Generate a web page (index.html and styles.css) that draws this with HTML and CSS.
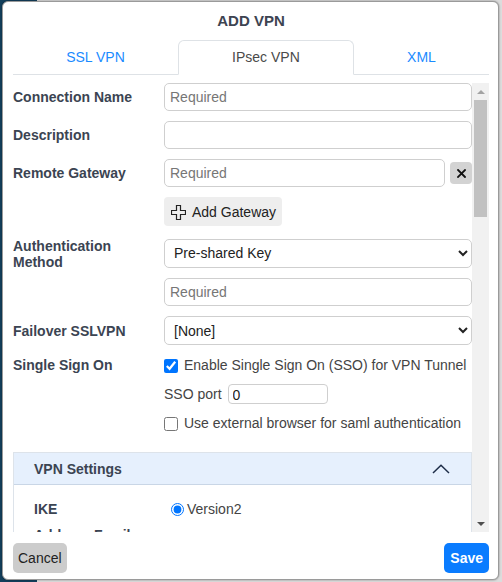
FILE: index.html
```html
<!DOCTYPE html>
<html lang="en">
<head>
<meta charset="utf-8">
<title>Add VPN</title>
<link rel="stylesheet" href="styles.css">
</head>
<body>
<div class="modal">
  <h1 class="title">ADD VPN</h1>
  <div class="tabs">
    <div class="tab">SSL VPN</div>
    <div class="tab active">IPsec VPN</div>
    <div class="tab">XML</div>
  </div>
  <div class="body">
    <div class="content">
      <div class="row">
        <label class="lbl">Connection Name</label>
        <input class="field" placeholder="Required">
      </div>
      <div class="row">
        <label class="lbl">Description</label>
        <input class="field">
      </div>
      <div class="row">
        <label class="lbl">Remote Gateway</label>
        <div class="inline">
          <input class="field" placeholder="Required">
          <button class="xbtn" type="button"><svg width="9" height="9" viewBox="0 0 9 9"><path d="M1 1L8 8M8 1L1 8" stroke="#111" stroke-width="1.8" stroke-linecap="square"/></svg></button>
        </div>
      </div>
      <div class="row">
        <span></span>
        <div><button class="addbtn" type="button"><svg class="plus" width="15" height="15" viewBox="0 0 15 15"><path d="M5.5 0.5H9.5V5.5H14.5V9.5H9.5V14.5H5.5V9.5H0.5V5.5H5.5Z" fill="none" stroke="#222" stroke-width="1.2"/></svg>Add Gateway</button></div>
      </div>
      <div class="row row-auth">
        <label class="lbl">Authentication Method</label>
        <select class="sel"><option>Pre-shared Key</option></select>
      </div>
      <div class="row">
        <span></span>
        <input class="field" placeholder="Required">
      </div>
      <div class="row">
        <label class="lbl">Failover SSLVPN</label>
        <select class="sel"><option>[None]</option></select>
      </div>
      <div class="row row-sso">
        <label class="lbl">Single Sign On</label>
        <div class="sso">
          <label class="line"><input type="checkbox" class="cb" checked>Enable Single Sign On (SSO) for VPN Tunnel</label>
          <div class="line port">SSO port <input class="portfield" value="0"></div>
          <label class="line ext"><input type="checkbox" class="cb">Use external browser for saml authentication</label>
        </div>
      </div>
      <div class="panel">
        <div class="panel-head">
          <span>VPN Settings</span>
          <svg width="18" height="10" viewBox="0 0 18 10"><polyline points="1,9 9,1.2 17,9" fill="none" stroke="#1e2d48" stroke-width="1.5"/></svg>
        </div>
        <div class="panel-body">
          <div class="prow">
            <span class="lbl">IKE</span>
            <label class="radio"><input type="radio" name="ike" checked>Version2</label>
          </div>
          <div class="prow next">
            <span class="lbl">Address Family</span>
            <span></span>
          </div>
        </div>
      </div>
    </div>
    <div class="scrollbar">
      <div class="sb-btn"><span class="tri-up"></span></div>
      <div class="sb-thumb"></div>
      <div class="sb-track"></div>
      <div class="sb-btn"><span class="tri-down"></span></div>
    </div>
  </div>
  <div class="footer">
    <button class="btn cancel" type="button">Cancel</button>
    <button class="btn save" type="button">Save</button>
  </div>
</div>
</body>
</html>
```
FILE: styles.css
```css
html, body {
  margin: 0;
  padding: 0;
}
body {
  width: 502px;
  height: 582px;
  overflow: hidden;
  background: linear-gradient(to right, #133f5c 0, #133f5c 37px, #dcdcdc 37px);
  font-family: "Liberation Sans", Arial, sans-serif;
  font-size: 14px;
  color: #444;
}
.modal {
  box-sizing: border-box;
  margin: 1px 0 0 2px;
  width: 497px;
  height: 579px;
  background: #fff;
  border: 1px solid #9a9a9a;
  border-radius: 6px;
  box-shadow: 0 0 2px rgba(0, 0, 0, 0.45);
  padding: 0 9px 0 10px;
  display: flex;
  flex-direction: column;
}
.title {
  margin: 9px 0 0;
  font-size: 15px;
  line-height: 20px;
  font-weight: bold;
  text-align: center;
  color: #3d4451;
}
.tabs {
  margin-top: 9px;
  display: flex;
  height: 34px;
  border-bottom: 1px solid #dee2e6;
}
.tab {
  flex: 1 1 auto;
  text-align: center;
  line-height: 34px;
  height: 34px;
  color: #1a8bff;
  font-size: 14px;
}
.tab.active {
  box-sizing: border-box;
  height: 35px;
  border: 1px solid #dee2e6;
  border-bottom-color: #fff;
  border-radius: 6px 6px 0 0;
  color: #4a4a4a;
  line-height: 33px;
  margin-bottom: -1px;
}
.body {
  margin-top: 8px;
  height: 449px;
  display: flex;
  flex: none;
}
.content {
  flex: 1;
  overflow: hidden;
}
.row {
  display: grid;
  grid-template-columns: 151px 1fr;
  align-items: center;
  margin-bottom: 10px;
}
.lbl {
  font-weight: bold;
  color: #3b4452;
  line-height: 16px;
  padding-right: 10px;
}
.row-auth {
  margin-bottom: 8px;
}
.row-auth .lbl {
  padding-top: 2px;
}
.field {
  box-sizing: border-box;
  width: 100%;
  height: 28px;
  border: 1px solid #cfcfcf;
  border-radius: 5px;
  padding: 0 5px;
  font-family: inherit;
  font-size: 14px;
  color: #222;
  outline: none;
}
.field::placeholder {
  color: #767676;
}
.inline {
  display: flex;
  align-items: center;
}
.xbtn {
  flex: none;
  width: 22px;
  height: 22px;
  margin-left: 5px;
  border: 0;
  border-radius: 4px;
  background: #d3d3d3;
  padding: 0;
  display: flex;
  align-items: center;
  justify-content: center;
}
.addbtn {
  height: 29px;
  display: inline-flex;
  align-items: center;
  gap: 6px;
  padding: 0 6px 0 7px;
  border: 0;
  border-radius: 4px;
  background: #eeeeee;
  font-family: inherit;
  font-size: 14px;
  color: #222;
}
.plus {
  margin-top: 1px;
}
.sel {
  box-sizing: border-box;
  width: 100%;
  height: 29px;
  border: 1px solid #cfcfcf;
  border-radius: 5px;
  padding: 0 5px;
  background: #fff;
  font-family: inherit;
  font-size: 14px;
  color: #222;
}
.row-sso {
  align-items: start;
}
.row-sso .lbl {
  line-height: 20px;
}
.sso {
  display: flex;
  flex-direction: column;
}
.line {
  display: flex;
  align-items: center;
  line-height: 20px;
  color: #444;
}
.cb {
  width: 14px;
  height: 14px;
  margin: 1px 6px 0 0;
}
.port {
  margin-top: 9px;
  gap: 6px;
}
.portfield {
  box-sizing: border-box;
  width: 100px;
  height: 20px;
  border: 1px solid #cfcfcf;
  border-radius: 4px;
  padding: 2px 4px 0;
  font-family: inherit;
  font-size: 14px;
  color: #222;
}
.ext {
  margin-top: 9px;
}
.panel {
  margin-top: 19px;
  border: 1px solid #dde3ea;
  border-bottom: 0;
}
.panel-head {
  height: 31px;
  display: flex;
  align-items: center;
  justify-content: space-between;
  padding: 0 21px 0 20px;
  background: #e6f0fd;
  border-bottom: 1px solid #c9d6e6;
  font-weight: bold;
  color: #3b4452;
}
.panel-body {
  padding: 14px 20px 0;
}
.prow {
  display: grid;
  grid-template-columns: 137px 1fr;
  align-items: center;
  line-height: 20px;
}
.prow .lbl {
  line-height: 20px;
}
.prow.next {
  margin-top: 6px;
}
.radio {
  display: flex;
  align-items: center;
  color: #444;
}
.radio input {
  width: 13px;
  height: 13px;
  margin: 0 3px 0 0;
}
.scrollbar {
  width: 17px;
  flex: none;
  background: #f1f1f1;
  display: flex;
  flex-direction: column;
}
.sb-btn {
  height: 17px;
  display: flex;
  align-items: center;
  justify-content: center;
  flex: none;
}
.tri-up {
  width: 0;
  height: 0;
  border-left: 4px solid transparent;
  border-right: 4px solid transparent;
  border-bottom: 4px solid #a3a3a3;
}
.tri-down {
  width: 0;
  height: 0;
  border-left: 4px solid transparent;
  border-right: 4px solid transparent;
  border-top: 4px solid #505050;
}
.sb-thumb {
  height: 117px;
  margin: 0 2px;
  background: #c1c1c1;
  flex: none;
}
.sb-track {
  flex: 1;
}
.footer {
  margin-top: 11px;
  display: flex;
  justify-content: space-between;
}
.btn {
  height: 30px;
  border: 0;
  border-radius: 5px;
  padding: 0 5px;
  font-family: inherit;
  font-size: 14px;
}
.cancel {
  background: #cccccc;
  color: #222;
}
.save {
  background: #0a7cff;
  color: #fff;
  font-weight: bold;
  padding: 0 6px;
}
```
